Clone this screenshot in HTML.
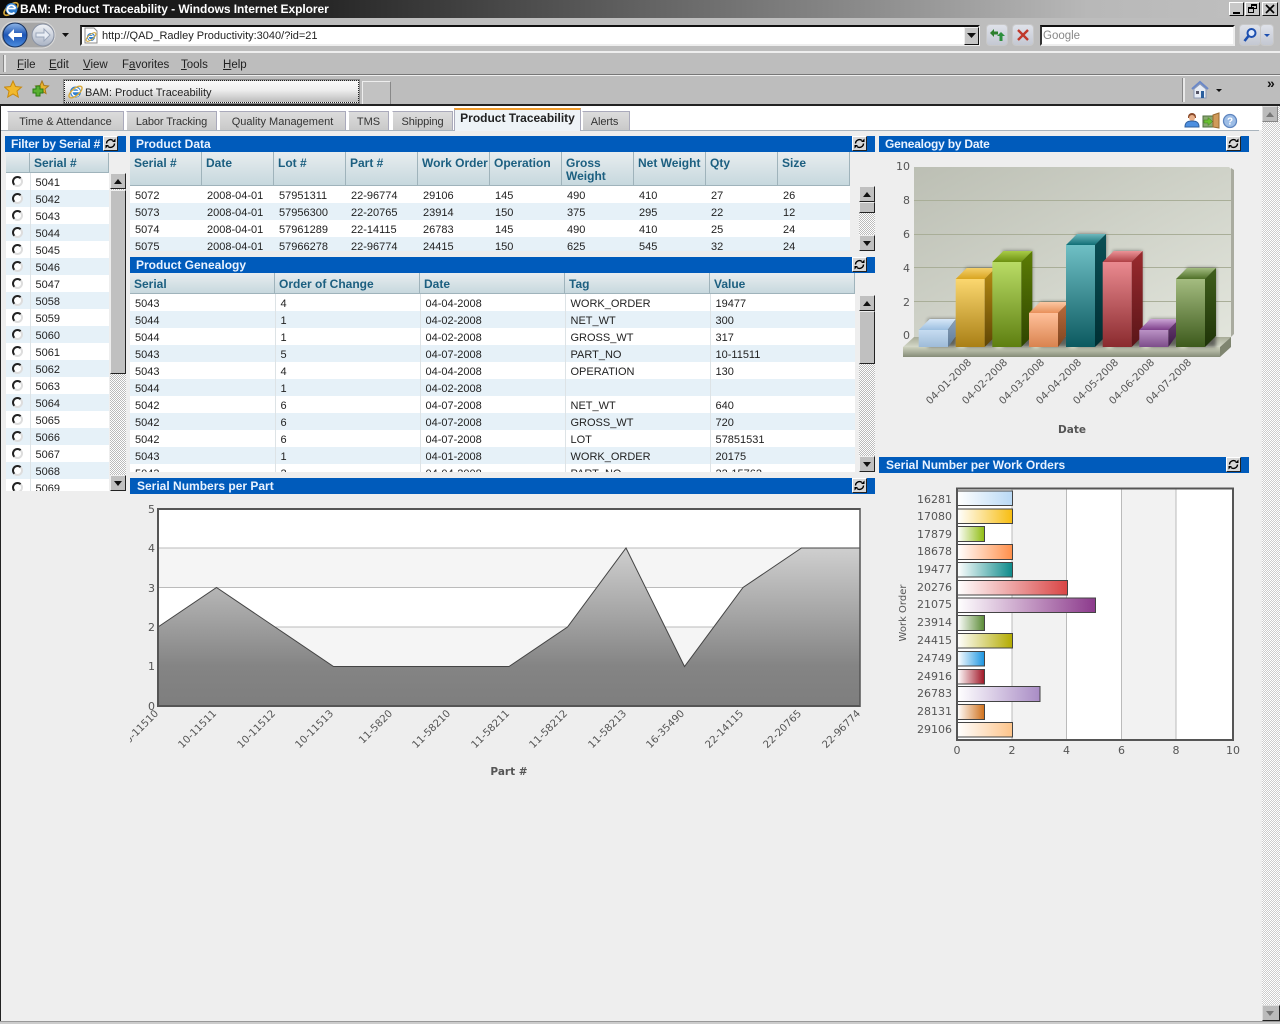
<!DOCTYPE html>
<html><head><meta charset="utf-8"><title>BAM: Product Traceability - Windows Internet Explorer</title>
<style>
html,body{margin:0;padding:0;width:1280px;height:1024px;overflow:hidden;background:#eee;font:11px "Liberation Sans",sans-serif;color:#222}
.a{position:absolute}
.chrome{background:#bdbdbd}
.tab{position:absolute;top:111px;height:19px;box-sizing:border-box;border:1px solid #aab;border-bottom:0;border-left-color:#fff;background:linear-gradient(#dcdcdc,#c9c9c9);text-align:center;line-height:20px;color:#333;font-size:11px;overflow:hidden}
.ph{position:absolute;height:16px;background:#005bbb;color:#eaf3ff;font:bold 12px/16px "Liberation Sans",sans-serif;padding-left:6px;box-sizing:border-box;white-space:nowrap}
.rf{position:absolute;top:0;width:15px;height:15px;box-sizing:border-box;background:#d8d8d8;border:1px solid;border-color:#fff #222 #222 #fff;letter-spacing:0}
.rf svg{position:absolute;left:0;top:0}
.grid{position:absolute;overflow:hidden;background:#fff}
table{border-collapse:collapse;table-layout:fixed;font:11px "Liberation Sans",sans-serif;color:#222}
td{height:17px;padding:4px 0 0 5px;white-space:nowrap;overflow:hidden;box-sizing:border-box;line-height:13px}
.f td{padding-top:3px;line-height:14px}
tr:nth-child(even) td{background:#e6f1f8}
.sep td{border-right:1px solid #dde3e6}
.hd{position:absolute;background:linear-gradient(#e8edef,#c7d8de);color:#1c5f80;font:bold 12px/13px "Liberation Sans",sans-serif;box-sizing:border-box;border-right:1px solid #9fb3bb;border-bottom:1px solid #9fb3bb;padding:5px 0 0 4px}
.track{position:absolute;width:16px;background:conic-gradient(#bbb 25%,#fff 0 50%,#bbb 0 75%,#fff 0) 0 0/2px 2px}
.sb{position:absolute;width:16px;box-sizing:border-box;background:#c0c0c0;border:1px solid;border-color:#eee #222 #222 #eee}
.up:after,.dn:after{content:"";position:absolute;left:3px;top:5px;border:4px solid transparent;border-top:0;border-bottom:5px solid #111}
.dn:after{border-bottom:0;border-top:5px solid #111;border-left-width:4px;border-right-width:4px}
.pg:after{border-top-color:#777;border-bottom-color:#777}
.pg.up:after{border-top-color:transparent}
.pg.dn:after{border-bottom-color:transparent}
.m{position:absolute;top:58px;font-size:11.500px;line-height:14px;color:#222}
.m u{text-decoration:underline}
.rad{position:absolute;left:12px;width:11px;height:11px;box-sizing:border-box;border-radius:50%;background:#fff;border:2px solid #222;border-right-color:#ddd;border-bottom-color:#ddd}
</style></head><body>

<!-- browser chrome -->
<div class="a chrome" style="left:0;top:0;width:1280px;height:105px"></div>
<div class="a" style="left:0;top:0;width:1280px;height:18px;background:linear-gradient(90deg,#0c0c0c 0,#262626 25%,#3e3e3e 35%,#8a8a8a 67%,#b8b8b8 85%,#c0c0c0 100%)"></div>
<svg class="a" style="left:2px;top:0" width="18" height="18"><ellipse cx="9" cy="9" rx="8.500" ry="4" transform="rotate(-40 9 9)" fill="none" stroke="#d7a93a" stroke-width="1.600"/><circle cx="9.500" cy="9" r="6" fill="#2f7fd0"/><path d="M5.500 8.500h8M13.500 8.500a4.200 4.200 0 1 0-1 4" fill="none" stroke="#fff" stroke-width="1.800"/></svg>
<div class="a" style="left:20px;top:1px;font:bold 12px/16px 'Liberation Sans',sans-serif;color:#fff;white-space:nowrap;letter-spacing:-.06px">BAM: Product Traceability - Windows Internet Explorer</div>
<div class="a" style="left:1229px;top:2px;width:15px;height:14px;box-sizing:border-box;background:#c8c8c8;border:1px solid;border-color:#fff #111 #111 #fff"><div class="a" style="left:3px;top:9px;width:7px;height:2px;background:#000"></div></div>
<div class="a" style="left:1245px;top:2px;width:15px;height:14px;box-sizing:border-box;background:#c8c8c8;border:1px solid;border-color:#fff #111 #111 #fff"><div class="a" style="left:5px;top:1px;width:6px;height:5px;box-sizing:border-box;border:1px solid #000;border-top-width:2px"></div><div class="a" style="left:2px;top:4px;width:6px;height:6px;box-sizing:border-box;border:1px solid #000;border-top-width:2px;background:#c8c8c8"></div></div>
<div class="a" style="left:1262px;top:2px;width:16px;height:14px;box-sizing:border-box;background:#c8c8c8;border:1px solid;border-color:#fff #111 #111 #fff"><svg class="a" style="left:2px;top:1px" width="10" height="10"><path d="M1 1l8 8M9 1l-8 8" stroke="#000" stroke-width="1.700"/></svg></div>

<!-- nav -->
<svg class="a" style="left:0;top:19px" width="75" height="32">
<defs><linearGradient id="bb" x1="0" y1="0" x2="0" y2="1"><stop offset="0" stop-color="#8fb6e8"/><stop offset=".5" stop-color="#1d55b5"/><stop offset="1" stop-color="#4d8ee0"/></linearGradient><linearGradient id="gb" x1="0" y1="0" x2="0" y2="1"><stop offset="0" stop-color="#f2f4f8"/><stop offset="1" stop-color="#a9b3c4"/></linearGradient></defs>
<rect x="1" y="3" width="54" height="26" rx="13" fill="#a6a6a6" stroke="#ddd"/>
<circle cx="15" cy="16" r="12" fill="url(#bb)" stroke="#16315f"/>
<path d="M8 16l6-6v4h8v4h-8v4z" fill="#fff"/>
<circle cx="43" cy="16" r="11" fill="url(#gb)" stroke="#8a93a5"/>
<path d="M50 16l-6-6v4h-8v4h8v4z" fill="#e8edf5" stroke="#9aa6ba"/>
<path d="M62 14h7l-3.500 4z" fill="#111"/>
</svg>
<div class="a" style="left:80px;top:25px;width:900px;height:21px;box-sizing:border-box;background:#fff;border:2px solid;border-color:#111 #eee #eee #333"></div>
<svg class="a" style="left:83px;top:27px" width="16" height="17"><path d="M2 1h9l3 3v12H2z" fill="#fff" stroke="#888"/><circle cx="8" cy="10" r="4" fill="#2f7fd0"/><path d="M5.500 9.500h5M10.500 9.500a2.600 2.600 0 1 0-.6 2.400" fill="none" stroke="#fff"/><ellipse cx="8" cy="10" rx="6" ry="2.500" transform="rotate(-40 8 10)" fill="none" stroke="#d7a93a"/></svg>
<div class="a" style="left:102px;top:29px;font-size:11px;line-height:15px;white-space:nowrap;color:#222">http://QAD_Radley Productivity:3040/?id=21</div>
<div class="a" style="left:964px;top:27px;width:15px;height:18px;box-sizing:border-box;background:#c6c6c6;border:1px solid;border-color:#eee #111 #111 #eee"><svg class="a" style="left:2px;top:5px" width="9" height="6"><path d="M0 0h9L4.500 5z" fill="#111"/></svg></div>
<div class="a" style="left:987px;top:25px;width:20px;height:20px;border-radius:3px;background:linear-gradient(#dfe2ea,#c4c8d2);box-shadow:0 0 0 1px #c8c8c8"><svg width="20" height="20"><path d="M3 8l4-4v2.500h4v3H7V12z" fill="#2d7f2d"/><path d="M14 7l4 4h-2.500v5h-3v-5H10z" fill="#2d8f3d"/></svg></div>
<div class="a" style="left:1013px;top:25px;width:20px;height:20px;border-radius:3px;background:linear-gradient(#dfe2ea,#c4c8d2);box-shadow:0 0 0 1px #c8c8c8"><svg width="20" height="20"><path d="M5 5l10 10M15 5L5 15" stroke="#c0392b" stroke-width="2.400"/></svg></div>
<div class="a" style="left:1040px;top:25px;width:195px;height:21px;box-sizing:border-box;background:#fff;border:2px solid;border-color:#111 #eee #eee #333;color:#888;font-size:11.500px;line-height:19px;padding-left:1px">Google</div>
<div class="a" style="left:1240px;top:25px;width:20px;height:20px;border-radius:3px;background:linear-gradient(#dfe2ea,#c4c8d2);box-shadow:0 0 0 1px #c8c8c8"><svg width="20" height="20"><circle cx="11.500" cy="8" r="4" fill="#dfe9fb" stroke="#1c4fb0" stroke-width="2"/><path d="M8.500 11L4.500 16" stroke="#1c4fb0" stroke-width="2.600"/></svg></div>
<div class="a" style="left:1261px;top:25px;width:12px;height:20px;border-radius:3px;background:linear-gradient(#dfe2ea,#c4c8d2);box-shadow:0 0 0 1px #c8c8c8"><svg width="12" height="20"><path d="M3 9h6l-3 3z" fill="#1c4fb0"/></svg></div>
<div class="a" style="left:0;top:51px;width:1280px;height:2px;background:#eee"></div>
<div class="a" style="left:3px;top:55px;width:2px;height:17px;background:#e8e8e8;border-left:1px solid #888"></div>
<div class="m" style="left:17px"><u>F</u>ile</div><div class="m" style="left:49px"><u>E</u>dit</div><div class="m" style="left:83px"><u>V</u>iew</div><div class="m" style="left:122px">F<u>a</u>vorites</div><div class="m" style="left:181px"><u>T</u>ools</div><div class="m" style="left:223px"><u>H</u>elp</div>
<div class="a" style="left:0;top:74px;width:1280px;height:1px;background:#777"></div>
<div class="a" style="left:0;top:75px;width:1280px;height:1px;background:#eee"></div>
<svg class="a" style="left:4px;top:80px" width="46" height="18"><path d="M9 1l2.500 5.500 6 .6-4.500 4 1.300 6L9 14l-5.300 3.100 1.300-6L.5 7.100l6-.6z" fill="#f2b92c" stroke="#c98a10"/><path d="M38 1l2 4.500 4.500.5-3.500 3 1 4.500-4-2.300-4 2.300 1-4.500-3.500-3 4.500-.5z" fill="#e9b32d" stroke="#a9781a"/><path d="M29 9h3V6h4v3h3v4h-3v3h-4v-3h-3z" fill="#58b030" stroke="#2c7a14"/></svg>
<div class="a" style="left:64px;top:80px;width:295px;height:23px;box-sizing:border-box;background:linear-gradient(#fafafa,#f0f0f0 40%,#bcbcbc);border:1px dotted #222;outline:1px solid #888"></div>
<svg class="a" style="left:67px;top:84px" width="17" height="16"><circle cx="8.500" cy="8" r="5.500" fill="#2f7fd0"/><path d="M5 7.500h7.500M12.500 7.500a3.800 3.800 0 1 0-.9 3.400" fill="none" stroke="#fff" stroke-width="1.400"/><ellipse cx="8.500" cy="8" rx="8" ry="3.500" transform="rotate(-40 8.500 8)" fill="none" stroke="#d7a93a" stroke-width="1.400"/></svg>
<div class="a" style="left:85px;top:86px;font-size:11px;line-height:14px;white-space:nowrap;color:#222">BAM: Product Traceability</div>
<div class="a" style="left:362px;top:81px;width:29px;height:24px;box-sizing:border-box;background:#c2c2c2;border:1px solid #888;border-top-color:#eee;border-left-color:#eee;border-bottom:0"></div>
<div class="a" style="left:1182px;top:78px;width:2px;height:24px;background:#e8e8e8;border-left:1px solid #888"></div>
<svg class="a" style="left:1191px;top:80px" width="34" height="20"><path d="M1 9L9 2l8 7" fill="none" stroke="#6a88c9" stroke-width="2"/><path d="M3 9l6-5 6 5v9H3z" fill="#e8edf5" stroke="#8a99b5"/><rect x="5" y="11" width="3" height="3" fill="#556"/><rect x="10" y="11" width="3" height="7" fill="#2a5f9e"/><path d="M25 9h6l-3 3z" fill="#111"/></svg>
<div class="a" style="left:1267px;top:76px;font:bold 14px/14px 'Liberation Sans',sans-serif;color:#111">&#187;</div>
<div class="a" style="left:0;top:104px;width:1280px;height:2px;background:#222"></div>

<!-- page -->
<div class="a" style="left:0;top:106px;width:1px;height:916px;background:#222"></div>
<div class="a" style="left:1px;top:106px;width:1261px;height:24px;background:#fff"></div>
<div class="a" style="left:1px;top:130px;width:1258px;height:1px;background:#a9b4bd"></div>
<div class="a" style="left:1px;top:131px;width:1261px;height:891px;background:#eee"></div>
<div class="tab" style="left:7px;width:117px">Time &amp; Attendance</div>
<div class="tab" style="left:126px;width:91px;letter-spacing:-.1px">Labor Tracking</div>
<div class="tab" style="left:219px;width:127px">Quality Management</div>
<div class="tab" style="left:348px;width:41px">TMS</div>
<div class="tab" style="left:392px;width:61px;letter-spacing:-.1px">Shipping</div>
<div class="a" style="left:454px;top:108px;width:127px;height:23px;box-sizing:border-box;background:#eef3f7;border:1px solid #aab;border-top:2px solid #f09a2a;border-bottom:0;text-align:center;font:bold 12px/17px 'Liberation Sans',sans-serif;color:#222">Product Traceability</div>
<div class="tab" style="left:582px;width:48px;padding-right:3px;letter-spacing:-.1px">Alerts</div>
<svg class="a" style="left:1184px;top:112px" width="54" height="17"><path d="M4 5a4 4 0 0 1 8 0v1H4z" fill="#8a4a2a"/><circle cx="8" cy="6" r="3" fill="#e8b08a"/><path d="M1 15c0-5 3-6 7-6s7 1 7 6z" fill="#4d8fe0" stroke="#30609e"/><rect x="19" y="4" width="10" height="11" fill="#8aa870" stroke="#4f6f3f"/><path d="M20 8h4V5.500l4.500 4-4.500 4V11h-4z" fill="#69c030" stroke="#3a7f1a" stroke-width=".5"/><path d="M29 3l6-2v15l-6-1z" fill="#d09a5a" stroke="#9a6a30"/><circle cx="46" cy="9" r="6.500" fill="#9dbde6" stroke="#5e85bf" stroke-width="1.300"/><text x="46" y="12.500" font-family="Liberation Sans" font-size="10" font-weight="bold" text-anchor="middle" fill="#fff">?</text></svg>

<!-- page scrollbar -->
<div class="track" style="left:1262px;top:106px;height:916px;width:18px;background:conic-gradient(#ccc 25%,#fff 0 50%,#ccc 0 75%,#fff 0) 0 0/2px 2px"></div>
<div class="sb up pg" style="left:1262px;top:106px;width:16px;height:16px;background:#bbb;border-color:#ddd #888 #888 #ddd"></div>
<div class="sb dn pg" style="left:1262px;top:1005px;width:18px;height:16px;background:#bbb;border-color:#ddd #222 #222 #ddd"></div>
<div class="a" style="left:0;top:1021px;width:1280px;height:1px;background:#999"></div>
<div class="a" style="left:0;top:1022px;width:1280px;height:2px;background:#ccc"></div>

<!-- filter -->
<div class="ph" style="left:5px;top:136px;width:121px;letter-spacing:-.2px">Filter by Serial #<div class="rf" style="left:98px"><svg width="13" height="13"><path d="M2.500 6.500a4 4 0 0 1 6.500-3M10.500 6.500a4 4 0 0 1-6.500 3" fill="none" stroke="#000" stroke-width="1.400"/><path d="M8 5h3.500V1.500zM5 8H1.500v3.500z" fill="#000"/></svg></div></div>
<div class="hd" style="left:6px;top:153px;width:24px;height:20px"></div>
<div class="hd" style="left:30px;top:153px;width:79px;height:20px;padding-top:4px">Serial #</div>
<div class="grid" style="left:6px;top:173px;width:103px;height:318px">
<table class="sep f" style="width:103px"><colgroup><col style="width:24px"><col style="width:79px"></colgroup>
<tr><td></td><td>5041</td></tr><tr><td></td><td>5042</td></tr><tr><td></td><td>5043</td></tr><tr><td></td><td>5044</td></tr><tr><td></td><td>5045</td></tr><tr><td></td><td>5046</td></tr><tr><td></td><td>5047</td></tr><tr><td></td><td>5058</td></tr><tr><td></td><td>5059</td></tr><tr><td></td><td>5060</td></tr><tr><td></td><td>5061</td></tr><tr><td></td><td>5062</td></tr><tr><td></td><td>5063</td></tr><tr><td></td><td>5064</td></tr><tr><td></td><td>5065</td></tr><tr><td></td><td>5066</td></tr><tr><td></td><td>5067</td></tr><tr><td></td><td>5068</td></tr><tr><td></td><td>5069</td></tr>
</table></div>
<div class="a" style="left:0;top:173px;width:109px;height:318px;overflow:hidden">
<div class="rad" style="top:3px"></div><div class="rad" style="top:20px"></div><div class="rad" style="top:37px"></div><div class="rad" style="top:54px"></div><div class="rad" style="top:71px"></div><div class="rad" style="top:88px"></div><div class="rad" style="top:105px"></div><div class="rad" style="top:122px"></div><div class="rad" style="top:139px"></div><div class="rad" style="top:156px"></div><div class="rad" style="top:173px"></div><div class="rad" style="top:190px"></div><div class="rad" style="top:207px"></div><div class="rad" style="top:224px"></div><div class="rad" style="top:241px"></div><div class="rad" style="top:258px"></div><div class="rad" style="top:275px"></div><div class="rad" style="top:292px"></div><div class="rad" style="top:309px"></div>
</div>
<div class="track" style="left:110px;top:173px;height:318px"></div>
<div class="sb up" style="left:110px;top:173px;height:16px"></div>
<div class="sb" style="left:110px;top:190px;height:184px"></div>
<div class="sb dn" style="left:110px;top:475px;height:16px"></div>

<!-- product data -->
<div class="ph" style="left:130px;top:136px;width:745px">Product Data<div class="rf" style="left:722px"><svg width="13" height="13"><path d="M2.500 6.500a4 4 0 0 1 6.500-3M10.500 6.500a4 4 0 0 1-6.500 3" fill="none" stroke="#000" stroke-width="1.400"/><path d="M8 5h3.500V1.500zM5 8H1.500v3.500z" fill="#000"/></svg></div></div>
<div class="hd" style="left:130px;top:152px;width:72px;height:34px">Serial #</div>
<div class="hd" style="left:202px;top:152px;width:72px;height:34px">Date</div>
<div class="hd" style="left:274px;top:152px;width:72px;height:34px">Lot #</div>
<div class="hd" style="left:346px;top:152px;width:72px;height:34px">Part #</div>
<div class="hd" style="left:418px;top:152px;width:72px;height:34px;white-space:nowrap">Work Order</div>
<div class="hd" style="left:490px;top:152px;width:72px;height:34px">Operation</div>
<div class="hd" style="left:562px;top:152px;width:72px;height:34px">Gross Weight</div>
<div class="hd" style="left:634px;top:152px;width:72px;height:34px;white-space:nowrap">Net Weight</div>
<div class="hd" style="left:706px;top:152px;width:72px;height:34px">Qty</div>
<div class="hd" style="left:778px;top:152px;width:72px;height:34px">Size</div>
<div class="grid" style="left:130px;top:186px;width:720px;height:65px">
<table style="width:720px"><colgroup><col span="10" style="width:72px"></colgroup>
<tr><td>5072</td><td>2008-04-01</td><td>57951311</td><td>22-96774</td><td>29106</td><td>145</td><td>490</td><td>410</td><td>27</td><td>26</td></tr>
<tr><td>5073</td><td>2008-04-01</td><td>57956300</td><td>22-20765</td><td>23914</td><td>150</td><td>375</td><td>295</td><td>22</td><td>12</td></tr>
<tr><td>5074</td><td>2008-04-01</td><td>57961289</td><td>22-14115</td><td>26783</td><td>145</td><td>490</td><td>410</td><td>25</td><td>24</td></tr>
<tr><td>5075</td><td>2008-04-01</td><td>57966278</td><td>22-96774</td><td>24415</td><td>150</td><td>625</td><td>545</td><td>32</td><td>24</td></tr>
</table></div>
<div class="track" style="left:859px;top:186px;height:65px"></div>
<div class="sb up" style="left:859px;top:186px;height:16px"></div>
<div class="sb" style="left:859px;top:202px;height:11px"></div>
<div class="sb dn" style="left:859px;top:235px;height:16px"></div>

<!-- genealogy -->
<div class="ph" style="left:130px;top:257px;width:745px">Product Genealogy<div class="rf" style="left:722px"><svg width="13" height="13"><path d="M2.500 6.500a4 4 0 0 1 6.500-3M10.500 6.500a4 4 0 0 1-6.500 3" fill="none" stroke="#000" stroke-width="1.400"/><path d="M8 5h3.500V1.500zM5 8H1.500v3.500z" fill="#000"/></svg></div></div>
<div class="hd" style="left:130px;top:273px;width:145px;height:21px">Serial</div>
<div class="hd" style="left:275px;top:273px;width:145px;height:21px">Order of Change</div>
<div class="hd" style="left:420px;top:273px;width:145px;height:21px">Date</div>
<div class="hd" style="left:565px;top:273px;width:145px;height:21px">Tag</div>
<div class="hd" style="left:710px;top:273px;width:145px;height:21px">Value</div>
<div class="grid" style="left:130px;top:294px;width:725px;height:178px">
<table class="sep" style="width:725px"><colgroup><col span="5" style="width:145px"></colgroup>
<tr><td>5043</td><td>4</td><td>04-04-2008</td><td>WORK_ORDER</td><td>19477</td></tr>
<tr><td>5044</td><td>1</td><td>04-02-2008</td><td>NET_WT</td><td>300</td></tr>
<tr><td>5044</td><td>1</td><td>04-02-2008</td><td>GROSS_WT</td><td>317</td></tr>
<tr><td>5043</td><td>5</td><td>04-07-2008</td><td>PART_NO</td><td>10-11511</td></tr>
<tr><td>5043</td><td>4</td><td>04-04-2008</td><td>OPERATION</td><td>130</td></tr>
<tr><td>5044</td><td>1</td><td>04-02-2008</td><td></td><td></td></tr>
<tr><td>5042</td><td>6</td><td>04-07-2008</td><td>NET_WT</td><td>640</td></tr>
<tr><td>5042</td><td>6</td><td>04-07-2008</td><td>GROSS_WT</td><td>720</td></tr>
<tr><td>5042</td><td>6</td><td>04-07-2008</td><td>LOT</td><td>57851531</td></tr>
<tr><td>5043</td><td>1</td><td>04-01-2008</td><td>WORK_ORDER</td><td>20175</td></tr>
<tr><td>5043</td><td>2</td><td>04-04-2008</td><td>PART_NO</td><td>22-15762</td></tr>
</table></div>
<div class="track" style="left:859px;top:295px;height:177px"></div>
<div class="sb up" style="left:859px;top:295px;height:16px"></div>
<div class="sb" style="left:859px;top:311px;height:53px"></div>
<div class="sb dn" style="left:859px;top:456px;height:16px"></div>

<div class="ph" style="left:130px;top:478px;width:745px;padding-left:7px">Serial Numbers per Part<div class="rf" style="left:722px"><svg width="13" height="13"><path d="M2.500 6.500a4 4 0 0 1 6.500-3M10.500 6.500a4 4 0 0 1-6.500 3" fill="none" stroke="#000" stroke-width="1.400"/><path d="M8 5h3.500V1.500zM5 8H1.500v3.500z" fill="#000"/></svg></div></div>
<div class="ph" style="left:879px;top:136px;width:370px;letter-spacing:-.2px">Genealogy by Date<div class="rf" style="left:347px"><svg width="13" height="13"><path d="M2.500 6.500a4 4 0 0 1 6.500-3M10.500 6.500a4 4 0 0 1-6.500 3" fill="none" stroke="#000" stroke-width="1.400"/><path d="M8 5h3.500V1.500zM5 8H1.500v3.500z" fill="#000"/></svg></div></div>
<div class="ph" style="left:879px;top:457px;width:370px;padding-left:7px">Serial Number per Work Orders<div class="rf" style="left:347px"><svg width="13" height="13"><path d="M2.500 6.500a4 4 0 0 1 6.500-3M10.500 6.500a4 4 0 0 1-6.500 3" fill="none" stroke="#000" stroke-width="1.400"/><path d="M8 5h3.500V1.500zM5 8H1.500v3.500z" fill="#000"/></svg></div></div>

<!-- area chart -->
<svg class="a" style="left:130px;top:495px" width="745" height="300" viewBox="130 495 745 300" font-family="DejaVu Sans" font-size="11" fill="#555">
<defs><linearGradient id="ar" gradientUnits="userSpaceOnUse" x1="0" y1="548" x2="0" y2="706"><stop offset="0" stop-color="#cfcfcf"/><stop offset=".75" stop-color="#848484"/><stop offset="1" stop-color="#7e7e7e"/></linearGradient></defs>
<rect x="158" y="509" width="702" height="197" fill="#fff"/>
<rect x="158" y="548" width="702" height="39.500" fill="#f5f5f5"/><rect x="158" y="627" width="702" height="39.500" fill="#f5f5f5"/>
<path d="M158 548h702M158 587.500h702M158 627h702M158 666.500h702" stroke="#bbb"/>
<path d="M158 627L216.500 587.500 275 627 333.500 666.500 392 666.500 450.500 666.500 509 666.500 567.500 627 626 548 684.500 666.500 743 587.500 801.500 548 860 548V706H158z" fill="url(#ar)"/>
<path d="M158 627L216.500 587.500 275 627 333.500 666.500 392 666.500 450.500 666.500 509 666.500 567.500 627 626 548 684.500 666.500 743 587.500 801.500 548 860 548" fill="none" stroke="#444"/>
<path d="M158 509H860" stroke="#555" stroke-width="2"/><path d="M158 706H860" stroke="#555" stroke-width="2"/><path d="M158 508V707" stroke="#555" stroke-width="2"/><path d="M860 508V707" stroke="#555" stroke-width="1.500"/>
<g text-anchor="end"><text x="155" y="513">5</text><text x="155" y="552">4</text><text x="155" y="592">3</text><text x="155" y="631">2</text><text x="155" y="670">1</text><text x="155" y="710">0</text>
<g font-size="10.200"><text transform="translate(159 714) rotate(-45)">10-11510</text><text transform="translate(217 714) rotate(-45)">10-11511</text><text transform="translate(276 714) rotate(-45)">10-11512</text><text transform="translate(334 714) rotate(-45)">10-11513</text><text transform="translate(393 714) rotate(-45)">11-5820</text><text transform="translate(451 714) rotate(-45)">11-58210</text><text transform="translate(510 714) rotate(-45)">11-58211</text><text transform="translate(568 714) rotate(-45)">11-58212</text><text transform="translate(627 714) rotate(-45)">11-58213</text><text transform="translate(685 714) rotate(-45)">16-35490</text><text transform="translate(744 714) rotate(-45)">22-14115</text><text transform="translate(802 714) rotate(-45)">22-20765</text><text transform="translate(861 714) rotate(-45)">22-96774</text></g></g>
<text x="509" y="775" text-anchor="middle" font-weight="bold" font-size="10.500">Part #</text>
</svg>

<!-- 3D chart -->
<svg class="a" style="left:880px;top:153px" width="369" height="290" viewBox="880 153 369 290" font-family="DejaVu Sans" font-size="11" fill="#555">
<defs>
<linearGradient id="wall" x1="0" y1="0" x2="1" y2="1"><stop offset="0" stop-color="#bcbfb4"/><stop offset="1" stop-color="#e2e5dc"/></linearGradient>
<linearGradient id="ft" x1="0" y1="0" x2="0" y2="1"><stop offset="0" stop-color="#a8ac98"/><stop offset="1" stop-color="#d4d8c8"/></linearGradient>
<linearGradient id="ff" x1="0" y1="0" x2="0" y2="1"><stop offset="0" stop-color="#cdd1bd"/><stop offset="1" stop-color="#858b77"/></linearGradient>
<linearGradient id="f1" x1="0" y1="0" x2="0" y2="1"><stop offset="0" stop-color="#c6dcf1"/><stop offset="1" stop-color="#9ebbd8"/></linearGradient><linearGradient id="t1" x1="0" y1="0" x2="0" y2="1"><stop offset="0" stop-color="#d8e8f8"/><stop offset="1" stop-color="#9cbfe0"/></linearGradient><linearGradient id="s1" x1="0" y1="0" x2="0" y2="1"><stop offset="0" stop-color="#8aa2bd"/><stop offset="1" stop-color="#5f7a95"/></linearGradient>
<linearGradient id="f2" x1="0" y1="0" x2="0" y2="1"><stop offset="0" stop-color="#fbd76f"/><stop offset="1" stop-color="#a97f15"/></linearGradient><linearGradient id="t2" x1="0" y1="0" x2="0" y2="1"><stop offset="0" stop-color="#f3cf6a"/><stop offset="1" stop-color="#d9a520"/></linearGradient><linearGradient id="s2" x1="0" y1="0" x2="0" y2="1"><stop offset="0" stop-color="#b58a12"/><stop offset="1" stop-color="#5f4505"/></linearGradient>
<linearGradient id="f3" x1="0" y1="0" x2="0" y2="1"><stop offset="0" stop-color="#b9dc66"/><stop offset="1" stop-color="#5e7f10"/></linearGradient><linearGradient id="t3" x1="0" y1="0" x2="0" y2="1"><stop offset="0" stop-color="#a9cc48"/><stop offset="1" stop-color="#6c9010"/></linearGradient><linearGradient id="s3" x1="0" y1="0" x2="0" y2="1"><stop offset="0" stop-color="#5c7d05"/><stop offset="1" stop-color="#2f4500"/></linearGradient>
<linearGradient id="f4" x1="0" y1="0" x2="0" y2="1"><stop offset="0" stop-color="#ffc09a"/><stop offset="1" stop-color="#d9834f"/></linearGradient><linearGradient id="t4" x1="0" y1="0" x2="0" y2="1"><stop offset="0" stop-color="#fcc8a3"/><stop offset="1" stop-color="#e8905a"/></linearGradient><linearGradient id="s4" x1="0" y1="0" x2="0" y2="1"><stop offset="0" stop-color="#b5693a"/><stop offset="1" stop-color="#7f4520"/></linearGradient>
<linearGradient id="f5" x1="0" y1="0" x2="0" y2="1"><stop offset="0" stop-color="#6fc0c5"/><stop offset="1" stop-color="#0c5a60"/></linearGradient><linearGradient id="t5" x1="0" y1="0" x2="0" y2="1"><stop offset="0" stop-color="#6fb8bd"/><stop offset="1" stop-color="#106e75"/></linearGradient><linearGradient id="s5" x1="0" y1="0" x2="0" y2="1"><stop offset="0" stop-color="#0a4f55"/><stop offset="1" stop-color="#002f33"/></linearGradient>
<linearGradient id="f6" x1="0" y1="0" x2="0" y2="1"><stop offset="0" stop-color="#ea8a90"/><stop offset="1" stop-color="#8a2a2e"/></linearGradient><linearGradient id="t6" x1="0" y1="0" x2="0" y2="1"><stop offset="0" stop-color="#eb9397"/><stop offset="1" stop-color="#b04045"/></linearGradient><linearGradient id="s6" x1="0" y1="0" x2="0" y2="1"><stop offset="0" stop-color="#9a2a2e"/><stop offset="1" stop-color="#5a1518"/></linearGradient>
<linearGradient id="f7" x1="0" y1="0" x2="0" y2="1"><stop offset="0" stop-color="#ba92c5"/><stop offset="1" stop-color="#7d4d8a"/></linearGradient><linearGradient id="t7" x1="0" y1="0" x2="0" y2="1"><stop offset="0" stop-color="#cba5d5"/><stop offset="1" stop-color="#7d3f8a"/></linearGradient><linearGradient id="s7" x1="0" y1="0" x2="0" y2="1"><stop offset="0" stop-color="#683a72"/><stop offset="1" stop-color="#3a1a45"/></linearGradient>
<linearGradient id="f8" x1="0" y1="0" x2="0" y2="1"><stop offset="0" stop-color="#a4bc80"/><stop offset="1" stop-color="#3d5a1c"/></linearGradient><linearGradient id="t8" x1="0" y1="0" x2="0" y2="1"><stop offset="0" stop-color="#a2bb80"/><stop offset="1" stop-color="#4f7028"/></linearGradient><linearGradient id="s8" x1="0" y1="0" x2="0" y2="1"><stop offset="0" stop-color="#3f5f1c"/><stop offset="1" stop-color="#1f3308"/></linearGradient>
<filter id="sh" x="-30%" y="-30%" width="160%" height="160%"><feGaussianBlur stdDeviation="1.800"/></filter>
</defs>
<path d="M1231 168l3 2v164l-3 3z" fill="#a9ab9f"/>
<path d="M914 167h315l2 2v168H914z" fill="url(#wall)"/>
<path d="M914 200.500h317M914 234.500h317M914 267.500h317M914 301.500h317" stroke="#a9ae98"/>
<path d="M903 347l11-10h317l-11 10z" fill="url(#ft)"/>
<rect x="903" y="347" width="317" height="10" fill="url(#ff)"/>
<path d="M1220 347l11-10v10l-11 10z" fill="#7f8570"/>
<g text-anchor="end"><text x="910" y="170">10</text><text x="910" y="204">8</text><text x="910" y="238">6</text><text x="910" y="272">4</text><text x="910" y="306">2</text><text x="910" y="339">0</text></g>
<g fill="#222" opacity=".6" filter="url(#sh)"><rect x="928" y="319" width="29" height="28"/><rect x="966" y="268" width="29" height="79"/><rect x="1003" y="251" width="29" height="96"/><rect x="1040" y="302" width="29" height="45"/><rect x="1077" y="234" width="29" height="113"/><rect x="1113" y="251" width="29" height="96"/><rect x="1150" y="319" width="29" height="28"/><rect x="1187" y="268" width="29" height="79"/></g>
<path d="M918.700 330l11-11h26l-8 11z" fill="url(#t1)"/><path d="M948 330l8-11v17l-8 11z" fill="url(#s1)"/><rect x="918.700" y="330" width="29.300" height="17" fill="url(#f1)"/>
<path d="M955.700 279l11-11h29l-11 11z" fill="url(#t2)"/><path d="M984.700 279l11-11v68l-11 11z" fill="url(#s2)"/><rect x="955.700" y="279" width="29" height="68" fill="url(#f2)"/>
<path d="M992.300 262l11-11h29l-11 11z" fill="url(#t3)"/><path d="M1021.300 262l11-11v85l-11 11z" fill="url(#s3)"/><rect x="992.300" y="262" width="29" height="85" fill="url(#f3)"/>
<path d="M1029 313l11-11h29l-11 11z" fill="url(#t4)"/><path d="M1058 313l8-8v31l-8 11z" fill="url(#s4)"/><rect x="1029" y="313" width="29" height="34" fill="url(#f4)"/>
<path d="M1066 245l11-11h29l-11 11z" fill="url(#t5)"/><path d="M1095 245l11-11v102l-11 11z" fill="url(#s5)"/><rect x="1066" y="245" width="29" height="102" fill="url(#f5)"/>
<path d="M1102.700 262l11-11h29l-11 11z" fill="url(#t6)"/><path d="M1131.700 262l11-11v85l-11 11z" fill="url(#s6)"/><rect x="1102.700" y="262" width="29" height="85" fill="url(#f6)"/>
<path d="M1139.300 330l11-11h29l-11 11z" fill="url(#t7)"/><path d="M1168.300 330l8-8v14l-8 11z" fill="url(#s7)"/><rect x="1139.300" y="330" width="29" height="17" fill="url(#f7)"/>
<path d="M1176 279l11-11h29l-11 11z" fill="url(#t8)"/><path d="M1205 279l11-11v68l-11 11z" fill="url(#s8)"/><rect x="1176" y="279" width="29" height="68" fill="url(#f8)"/>
<g text-anchor="end" font-size="10.200"><text transform="translate(972 363) rotate(-45)">04-01-2008</text><text transform="translate(1008 363) rotate(-45)">04-02-2008</text><text transform="translate(1045 363) rotate(-45)">04-03-2008</text><text transform="translate(1082 363) rotate(-45)">04-04-2008</text><text transform="translate(1119 363) rotate(-45)">04-05-2008</text><text transform="translate(1155 363) rotate(-45)">04-06-2008</text><text transform="translate(1192 363) rotate(-45)">04-07-2008</text></g>
<text x="1072" y="433" text-anchor="middle" font-weight="bold" font-size="10.500">Date</text>
</svg>

<!-- bar chart -->
<svg class="a" style="left:880px;top:475px" width="369" height="290" viewBox="880 475 369 290" font-family="DejaVu Sans" font-size="11" fill="#555">
<defs>
<linearGradient id="a1"><stop offset="0" stop-color="#fff"/><stop offset="1" stop-color="#b9d9f5"/></linearGradient>
<linearGradient id="a2"><stop offset="0" stop-color="#fff"/><stop offset="1" stop-color="#f7bd10"/></linearGradient>
<linearGradient id="a3"><stop offset="0" stop-color="#fff"/><stop offset="1" stop-color="#8fbc10"/></linearGradient>
<linearGradient id="a4"><stop offset="0" stop-color="#fff"/><stop offset="1" stop-color="#ff8f4a"/></linearGradient>
<linearGradient id="a5"><stop offset="0" stop-color="#fff"/><stop offset="1" stop-color="#0c8a8a"/></linearGradient>
<linearGradient id="a6"><stop offset="0" stop-color="#fff"/><stop offset="1" stop-color="#d94545"/></linearGradient>
<linearGradient id="a7"><stop offset="0" stop-color="#fff"/><stop offset="1" stop-color="#8c3a8c"/></linearGradient>
<linearGradient id="a8"><stop offset="0" stop-color="#fff"/><stop offset="1" stop-color="#5a8a35"/></linearGradient>
<linearGradient id="a9"><stop offset="0" stop-color="#fff"/><stop offset="1" stop-color="#b3ab00"/></linearGradient>
<linearGradient id="a10"><stop offset="0" stop-color="#fff"/><stop offset="1" stop-color="#1a94e0"/></linearGradient>
<linearGradient id="a11"><stop offset="0" stop-color="#fff"/><stop offset="1" stop-color="#a01525"/></linearGradient>
<linearGradient id="a12"><stop offset="0" stop-color="#fff"/><stop offset="1" stop-color="#a98cc5"/></linearGradient>
<linearGradient id="a13"><stop offset="0" stop-color="#fff"/><stop offset="1" stop-color="#d0701a"/></linearGradient>
<linearGradient id="a14"><stop offset="0" stop-color="#fff"/><stop offset="1" stop-color="#fdc48a"/></linearGradient>
</defs>
<rect x="957" y="489" width="276" height="251" fill="#fff"/>
<rect x="1012" y="489" width="54.500" height="251" fill="#f2f2f2"/><rect x="1121.500" y="489" width="54.500" height="251" fill="#f2f2f2"/>
<path d="M1012 489V740M1066.500 489V740M1121.500 489V740M1176 489V740" stroke="#bbb"/>
<g stroke="#444" stroke-width="1">
<rect x="957.500" y="491" width="55" height="14.500" fill="url(#a1)"/>
<rect x="957.500" y="509" width="55" height="14.500" fill="url(#a2)"/>
<rect x="957.500" y="526.500" width="27" height="15" fill="url(#a3)"/>
<rect x="957.500" y="544.500" width="55" height="15" fill="url(#a4)"/>
<rect x="957.500" y="562.500" width="55" height="14.500" fill="url(#a5)"/>
<rect x="957.500" y="580.500" width="110" height="14.500" fill="url(#a6)"/>
<rect x="957.500" y="598" width="138" height="14.500" fill="url(#a7)"/>
<rect x="957.500" y="615.500" width="27" height="15" fill="url(#a8)"/>
<rect x="957.500" y="633.500" width="55" height="14.500" fill="url(#a9)"/>
<rect x="957.500" y="651.500" width="27" height="14.500" fill="url(#a10)"/>
<rect x="957.500" y="669.500" width="27" height="14.500" fill="url(#a11)"/>
<rect x="957.500" y="686.500" width="82.500" height="15" fill="url(#a12)"/>
<rect x="957.500" y="704.500" width="27" height="15" fill="url(#a13)"/>
<rect x="957.500" y="722.500" width="55" height="14.500" fill="url(#a14)"/>
</g>
<rect x="957" y="488.500" width="276" height="251.500" fill="none" stroke="#555" stroke-width="2"/>
<g text-anchor="end"><text x="952" y="503">16281</text><text x="952" y="520">17080</text><text x="952" y="538">17879</text><text x="952" y="555">18678</text><text x="952" y="573">19477</text><text x="952" y="591">20276</text><text x="952" y="608">21075</text><text x="952" y="626">23914</text><text x="952" y="644">24415</text><text x="952" y="662">24749</text><text x="952" y="680">24916</text><text x="952" y="697">26783</text><text x="952" y="715">28131</text><text x="952" y="733">29106</text></g>
<g text-anchor="middle"><text x="957" y="754">0</text><text x="1012" y="754">2</text><text x="1066.500" y="754">4</text><text x="1121.500" y="754">6</text><text x="1176" y="754">8</text><text x="1233" y="754">10</text></g>
<text transform="translate(906 613) rotate(-90)" text-anchor="middle" font-size="10">Work Order</text>
</svg>
</body></html>
